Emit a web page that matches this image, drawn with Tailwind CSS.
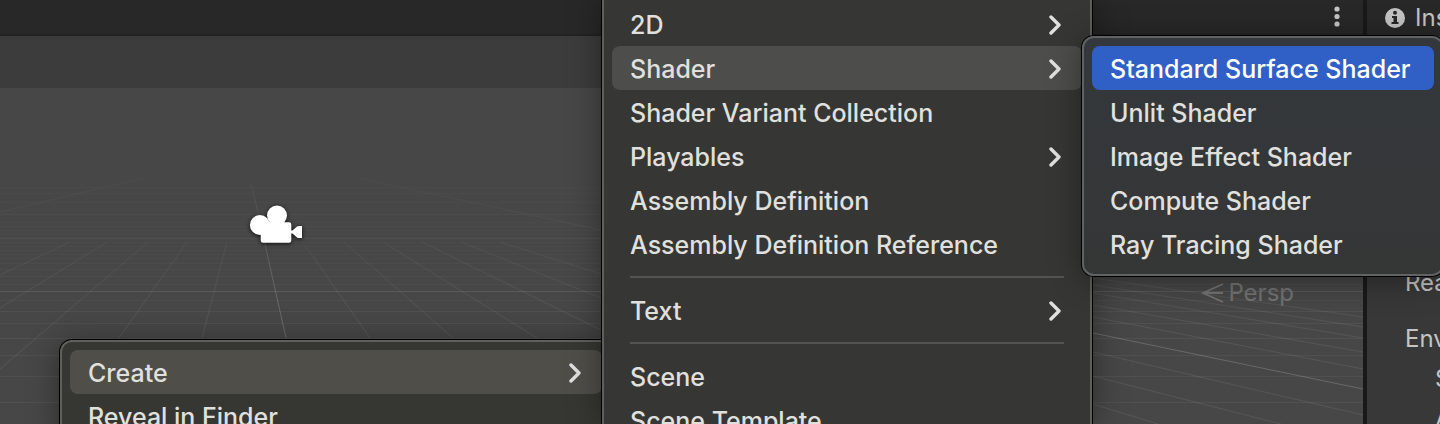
<!DOCTYPE html>
<html lang="en">
<head>
<meta charset="utf-8">
<title>Scene editor</title>
<script src="https://cdn.jsdelivr.net/npm/@tailwindcss/browser@4"></script>
</head>
<body class="bg-[#474747] font-['Inter',sans-serif]">
<svg class="hidden" aria-hidden="true">
  <symbol id="chevron" viewBox="0 0 12 20"><path d="M2 2 L10 10 L2 18" fill="none" stroke="currentColor" stroke-width="3.400" stroke-linecap="round" stroke-linejoin="round"/></symbol>
</svg>
<div class="relative flex h-screen overflow-hidden">

  <!-- Scene view -->
  <main class="flex min-w-0 flex-1 flex-col">
    <div class="flex h-9 shrink-0 items-center justify-end border-b-2 border-[#232323] bg-[#282828] pr-5">
      <button class="flex h-6 w-3 items-center justify-center text-[#c4c4c4]" aria-label="Scene view options">
        <svg class="h-6 w-2" viewBox="0 0 8 24" fill="currentColor"><circle cx="4" cy="4" r="2.6"/><circle cx="4" cy="11.500" r="2.6"/><circle cx="4" cy="19" r="2.6"/></svg>
      </button>
    </div>
    <div class="h-13 shrink-0 bg-[#3c3c3c]"></div>
    <div class="relative min-h-0 flex-1 bg-[#474747]">
      <svg class="h-full w-full" viewBox="0 88 1363 336" preserveAspectRatio="xMinYMin slice" fill="none" stroke="#fff" aria-label="Scene grid">
        <defs>
          <linearGradient id="fade" x1="0" y1="178" x2="0" y2="340" gradientUnits="userSpaceOnUse"><stop offset="0" stop-color="#fff" stop-opacity="0.02"/><stop offset="1" stop-color="#fff" stop-opacity="0.08"/></linearGradient>
          <linearGradient id="axis" x1="0" y1="182" x2="0" y2="300" gradientUnits="userSpaceOnUse"><stop offset="0" stop-color="#fff" stop-opacity="0.03"/><stop offset="1" stop-color="#fff" stop-opacity="0.18"/></linearGradient>
        </defs>
        <g stroke-opacity="0.018">
          <path d="M0 187.500H1363M0 193.500H1363M0 202.500H1363M0 222.500H1363M0 226.500H1363M0 230.500H1363M0 234.500H1363M0 242.500H1363M0 246.500H1363M0 250.500H1363M0 254.500H1363M0 258.500H1363"/>
        </g>
        <path stroke-opacity="0.03" d="M0 214.500H1363M0 263.500H1363M0 269.500H1363M0 276.500H1363M0 284.500H1363M0 300.500H1363"/>
        <path stroke-opacity="0.05" d="M0 238.500H1363M0 311.500H1363M0 323.500H1363M0 338.500H1363M0 355.500H1363M0 376.500H1363M0 402.500H1363"/>
        <path stroke-opacity="0.1" d="M0 291.500H1363"/>
        <g stroke="url(#fade)">
          <path d="M0 212L144 178M358 178L601 230M0 275L70 242M0 308L107 242M0 369L148 242M119 338L187 242M202 338L227 242M305 245L370 338M344 242L453 338M383 242L537 338M422 242L601 330M461 242L601 298M500 242L601 274"/>
          <path d="M1093 352L1363 415M1093 376L1281 424M1093 404L1158 424M1093 317L1363 369M1093 305L1363 352M1093 293L1363 338M1093 285L1363 327M1093 278L1363 317"/>
        </g>
        <path stroke="url(#axis)" d="M251 182L286 338M1093 333L1363 389"/>
      </svg>

      <!-- Camera gizmo -->
      <svg class="absolute top-[114px] left-[246px] h-12 w-15 drop-shadow-[0_1px_2px_rgb(0_0_0/0.8)]" viewBox="0 0 60 48" fill="#fff" aria-label="Main camera">
        <circle cx="13.900" cy="23" r="10"/><circle cx="31" cy="13.500" r="10"/>
        <path d="M18 20L39 18L38 20.300H43Q45.300 20.300 45.300 22.500V28.500H46.500L51 24.500Q52 24 53 24H56V36H53Q52 36 51 35.500L46.500 31.500H45.300V38.500Q45.300 40.700 43 40.700H17Q14.700 40.700 14.700 38.500V28Z"/>
      </svg>

      <!-- Projection label -->
      <button class="absolute top-[189px] right-[69px] flex items-center gap-1 text-[24px] leading-8 text-[#737373]">
        <svg class="h-6 w-6" viewBox="0 0 24 24" fill="none" stroke="currentColor" stroke-width="1.800" aria-hidden="true"><path d="M23 3L3 12L23 21M3 12H23"/></svg>
        Persp
      </button>
    </div>
  </main>

  <!-- Inspector -->
  <aside class="w-[77px] shrink-0 overflow-hidden border-l-4 border-[#191919] bg-[#383838] text-[24px] leading-8 whitespace-nowrap text-[#c4c4c4]">
    <div class="flex h-9 items-center gap-[10px] bg-[#282828] pl-[18px]">
      <svg class="h-5 w-5 shrink-0" viewBox="0 0 20 20" aria-hidden="true"><circle cx="10" cy="10" r="10" fill="#c4c4c4"/><circle cx="10" cy="4.800" r="2" fill="#282828"/><path d="M7 8H12V14H13.500V16H6.500V14H8.500V10H7Z" fill="#282828"/></svg>
      <h2>Inspector</h2>
    </div>
    <div class="flex flex-col gap-2 pt-[231px] pl-[38px]">
      <span>Realtime</span>
      <span class="mt-4">Environment</span>
      <span class="pl-[30px]">Skybox</span>
      <span class="pl-[30px]">Ambient</span>
    </div>
  </aside>

  <!-- Context menu -->
  <div role="menu" class="absolute top-[340px] left-[60px] flex w-[552px] flex-col rounded-xl border-2 border-[#5f5f5b] bg-[#363632] p-2 text-[25px] leading-8 font-medium text-[#e0e0de] shadow-[0_0_0_1px_#000,0_4px_32px_rgb(0_0_0/0.4)]">
    <button role="menuitem" class="flex h-11 items-center justify-between rounded-lg bg-[#4f4e49] pt-0.5 pr-[21px] pl-[18px]">Create<svg class="h-5 w-3"><use href="#chevron"/></svg></button>
    <button role="menuitem" class="h-11 pt-0.5 pl-[18px] text-left">Reveal in Finder</button>
  </div>

  <!-- Create submenu -->
  <div role="menu" class="absolute top-0 left-[602px] flex h-full w-[490px] flex-col border-x-2 border-[#5f5f5d] bg-[#363634] px-2 pt-[2px] text-[25px] leading-8 font-medium text-[#e0e0de] shadow-[0_0_0_1px_#000,0_0_32px_rgb(0_0_0/0.4)]">
    <button role="menuitem" class="flex h-11 shrink-0 items-center justify-between pt-0.5 pr-[21px] pl-[18px]">2D<svg class="h-5 w-3"><use href="#chevron"/></svg></button>
    <button role="menuitem" class="flex h-11 shrink-0 items-center justify-between rounded-lg bg-[#4d4d4b] pt-0.5 pr-[21px] pl-[18px]">Shader<svg class="h-5 w-3"><use href="#chevron"/></svg></button>
    <button role="menuitem" class="h-11 shrink-0 px-[18px] pt-0.5 text-left">Shader Variant Collection</button>
    <button role="menuitem" class="flex h-11 shrink-0 items-center justify-between pt-0.5 pr-[21px] pl-[18px]">Playables<svg class="h-5 w-3"><use href="#chevron"/></svg></button>
    <button role="menuitem" class="h-11 shrink-0 px-[18px] pt-0.5 text-left">Assembly Definition</button>
    <button role="menuitem" class="h-11 shrink-0 px-[18px] pt-0.5 text-left">Assembly Definition Reference</button>
    <hr class="mx-[18px] my-[10px] shrink-0 border-t-2 border-[#545452]">
    <button role="menuitem" class="flex h-11 shrink-0 items-center justify-between pt-0.5 pr-[21px] pl-[18px]">Text<svg class="h-5 w-3"><use href="#chevron"/></svg></button>
    <hr class="mx-[18px] my-[10px] shrink-0 border-t-2 border-[#545452]">
    <button role="menuitem" class="h-11 shrink-0 px-[18px] pt-0.5 text-left">Scene</button>
    <button role="menuitem" class="h-11 shrink-0 px-[18px] pt-0.5 text-left">Scene Template</button>
  </div>

  <!-- Shader submenu -->
  <div role="menu" class="absolute top-9 left-[1082px] flex w-[362px] flex-col rounded-xl border-2 border-[#606264] bg-linear-to-b from-[#34383c] to-[#353636] p-2 text-[25px] leading-8 font-medium whitespace-nowrap text-[#e0e0de] shadow-[0_0_0_1px_#000,0_4px_32px_rgb(0_0_0/0.4)]">
    <button role="menuitem" class="h-11 rounded-lg bg-[#305fc6] px-[18px] pt-0.5 text-left text-white">Standard Surface Shader</button>
    <button role="menuitem" class="h-11 px-[18px] pt-0.5 text-left">Unlit Shader</button>
    <button role="menuitem" class="h-11 px-[18px] pt-0.5 text-left">Image Effect Shader</button>
    <button role="menuitem" class="h-11 px-[18px] pt-0.5 text-left">Compute Shader</button>
    <button role="menuitem" class="h-11 px-[18px] pt-0.5 text-left">Ray Tracing Shader</button>
  </div>
</div>
</body>
</html>
